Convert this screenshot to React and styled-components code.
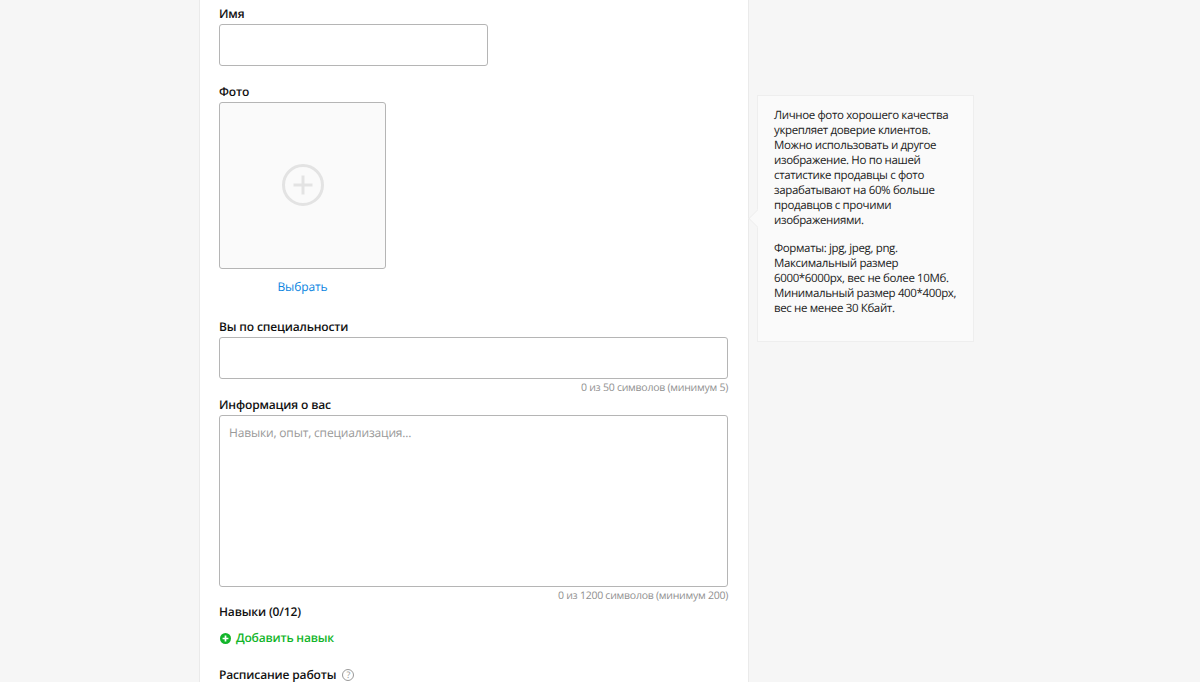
import React from "react";
import styled, { createGlobalStyle } from "styled-components";

const GlobalStyle = createGlobalStyle`
  html, body {
    margin: 0;
    padding: 0;
    height: 100%;
    overflow: hidden;
    background: #f6f6f6;
    font-family: "Open Sans", "Liberation Sans", sans-serif;
    color: #000;
    text-rendering: geometricPrecision;
  }
`;

export default function App() {
  return (
    <>
      <GlobalStyle />
      <Page>
        <Card>
          <Field $top={5}>
            <Label>Имя</Label>
            <NameInput />
          </Field>

          <Field $top={17}>
            <Label>Фото</Label>
            <PhotoBox>
              <svg width="44" height="44" viewBox="0 0 44 44" fill="none" stroke="#e3e3e3">
                <circle cx="22" cy="22" r="19.5" strokeWidth="3" />
                <path d="M22 12.5v19M12.5 22h19" strokeWidth="3" />
              </svg>
            </PhotoBox>
            <PickLink>Выбрать</PickLink>
          </Field>

          <Field $top={22}>
            <Label>Вы по специальности</Label>
            <WideInput />
            <Counter>0 из 50 символов (минимум 5)</Counter>
          </Field>

          <Field $top={1}>
            <Label>Информация о вас</Label>
            <TextArea>Навыки, опыт, специализация...</TextArea>
            <Counter>0 из 1200 символов (минимум 200)</Counter>
          </Field>

          <Field $top={0}>
            <Label>Навыки (0/12)</Label>
            <AddLink>
              <svg width="11" height="11" viewBox="0 0 11 11">
                <circle cx="5.5" cy="5.5" r="5.5" fill="#12b52a" />
                <path d="M5.5 2.6v5.8M2.6 5.5h5.8" stroke="#fff" strokeWidth="1.7" />
              </svg>
              Добавить навык
            </AddLink>
          </Field>

          <Field $top={19}>
            <ScheduleLabel>
              Расписание работы
              <HelpMark>?</HelpMark>
            </ScheduleLabel>
          </Field>
        </Card>

        <Hint>
          <HintText>
            Личное фото хорошего качества укрепляет доверие клиентов. Можно
            использовать и другое изображение. Но по нашей статистике продавцы с
            фото зарабатывают на 60% больше продавцов с прочими изображениями.
          </HintText>
          <HintText>
            Форматы: jpg, jpeg, png.
            <br />
            Максимальный размер 6000*6000px, вес не более 10Мб. Минимальный
            размер 400*400px, вес не менее 30 Кбайт.
          </HintText>
        </Hint>
      </Page>
    </>
  );
}

const Page = styled.div`
  display: flex;
  align-items: flex-start;
  gap: 8px;
  height: 682px;
  padding-left: 199px;
  overflow: hidden;
`;

const Card = styled.div`
  box-sizing: border-box;
  width: 550px;
  min-height: 720px;
  padding: 0 19px;
  background: #fff;
  border: 1px solid #eaeaea;
  border-top: 0;
  flex-shrink: 0;
`;

const Field = styled.div`
  display: flex;
  flex-direction: column;
  align-items: flex-start;
  margin-top: ${(p) => p.$top}px;
`;

const Label = styled.div`
  height: 18px;
  margin-bottom: 1px;
  font-size: 12px;
  font-weight: 600;
  letter-spacing: -0.15px;
  line-height: 18px;
  color: #111;
`;

const ScheduleLabel = styled(Label)`
  display: flex;
  align-items: center;
  gap: 6px;
`;

const HelpMark = styled.span`
  box-sizing: border-box;
  display: flex;
  align-items: center;
  justify-content: center;
  width: 12px;
  height: 12px;
  border: 1px solid #999;
  border-radius: 50%;
  font-size: 9px;
  font-weight: 400;
  color: #999;
`;

const NameInput = styled.div`
  box-sizing: border-box;
  width: 269px;
  height: 42px;
  background: #fff;
  border: 1px solid #b5b5b5;
  border-radius: 3px;
`;

const WideInput = styled(NameInput)`
  width: 509px;
`;

const PhotoBox = styled.div`
  box-sizing: border-box;
  display: flex;
  align-items: center;
  justify-content: center;
  width: 167px;
  height: 167px;
  padding-bottom: 2px;
  background: #fafafa;
  border: 1px solid #b5b5b5;
  border-radius: 3px;
`;

const PickLink = styled.div`
  width: 167px;
  margin-top: 9px;
  text-align: center;
  font-size: 12px;
  letter-spacing: -0.1px;
  line-height: 18px;
  color: #0a84df;
`;

const Counter = styled.div`
  width: 509px;
  margin-top: 2px;
  text-align: right;
  font-size: 10.5px;
  letter-spacing: -0.25px;
  line-height: 14px;
  color: #8f8f8f;
`;

const TextArea = styled.div`
  box-sizing: border-box;
  width: 509px;
  height: 172px;
  padding: 8px 9px;
  background: #fff;
  border: 1px solid #b5b5b5;
  border-radius: 3px;
  font-size: 12px;
  letter-spacing: -0.17px;
  line-height: 18px;
  color: #999;
`;

const AddLink = styled.div`
  display: flex;
  align-items: center;
  gap: 5px;
  margin: 7px 0 0 1px;
  font-size: 12px;
  font-weight: 600;
  letter-spacing: -0.2px;
  line-height: 18px;
  color: #12b52a;
`;

const Hint = styled.div`
  position: relative;
  box-sizing: border-box;
  width: 217px;
  height: 247px;
  margin-top: 95px;
  padding: 12px 14px 12px 16px;
  background: #fafafa;
  border: 1px solid #eeeeee;
  flex-shrink: 0;

  &::before {
    content: "";
    position: absolute;
    left: -7px;
    top: 116px;
    width: 12px;
    height: 12px;
    background: #fafafa;
    border-left: 1px solid #eeeeee;
    border-bottom: 1px solid #eeeeee;
    transform: rotate(45deg);
  }
`;

const HintText = styled.p`
  position: relative;
  margin: 0 0 13px;
  font-size: 11.5px;
  letter-spacing: -0.36px;
  line-height: 15px;
  color: #222;
`;
